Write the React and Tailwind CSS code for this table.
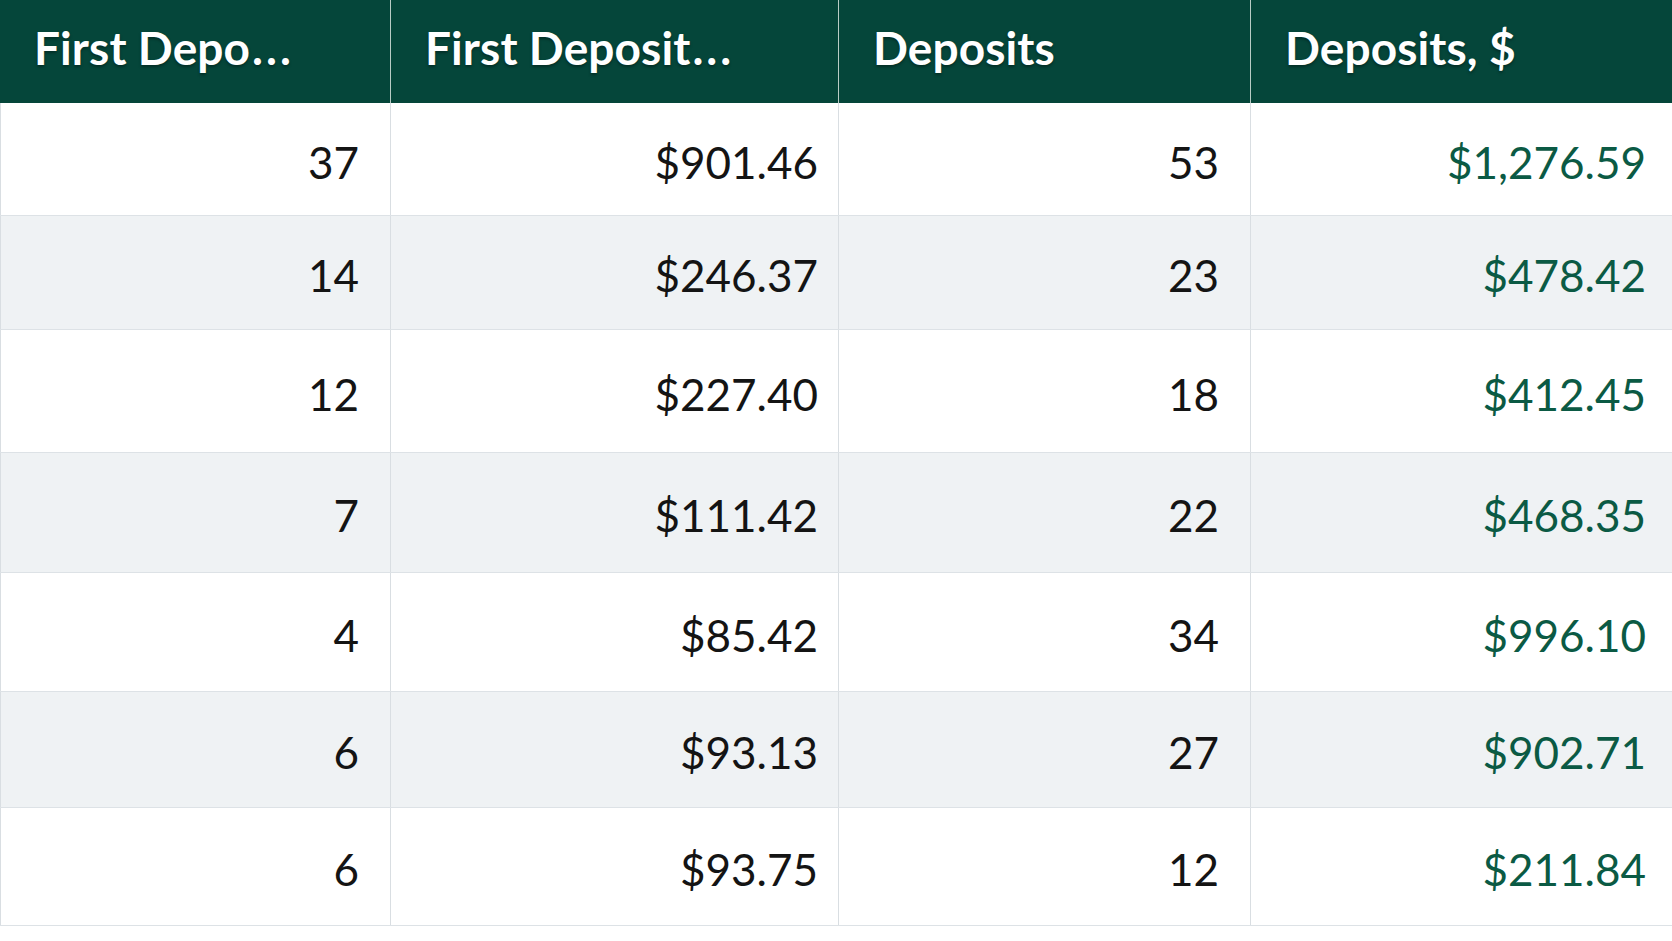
import React from "react";

const rows = [
  { h: "h-[113px]", a: "37", b: "$901.46", c: "53", d: "$1,276.59", striped: false },
  { h: "h-[114px]", a: "14", b: "$246.37", c: "23", d: "$478.42", striped: true },
  { h: "h-[123px]", a: "12", b: "$227.40", c: "18", d: "$412.45", striped: false },
  { h: "h-[120px]", a: "7", b: "$111.42", c: "22", d: "$468.35", striped: true },
  { h: "h-[119px]", a: "4", b: "$85.42", c: "34", d: "$996.10", striped: false },
  { h: "h-[116px]", a: "6", b: "$93.13", c: "27", d: "$902.71", striped: true },
  { h: "h-[118px]", a: "6", b: "$93.75", c: "12", d: "$211.84", striped: false },
];

const headers = [
  { t: "First Depo", dots: true },
  { t: "First Deposit", dots: true },
  { t: "Deposits", dots: false },
  { t: "Deposits, $", dots: false },
];

export default function App() {
  return (
    <div className="w-[1672px] h-[941px] bg-white overflow-hidden font-['Lato',_'Liberation_Sans',_sans-serif]">
      <div className="grid grid-cols-[391px_448px_412px_421px] h-[103px] bg-[#05463a]">
        {headers.map((h, i) => (
          <div
            key={i}
            className={`flex items-center pl-[34px] pb-[8px] text-[46px] font-bold text-white tracking-[0.1px] whitespace-nowrap [text-shadow:0_2px_3px_rgba(0,0,0,0.35)] ${
              i < 3 ? "border-r border-[#b9ccc5]" : ""
            }`}
          >
            {h.t}
            {h.dots && <span className="tracking-[3px] ml-[2px]">...</span>}
          </div>
        ))}
      </div>
      {rows.map((r, idx) => (
        <div
          key={idx}
          className={`grid grid-cols-[391px_448px_412px_421px] ${r.h} border-b border-[#dde2e6] ${
            r.striped ? "bg-[#eff2f4]" : "bg-white"
          }`}
        >
          <div className="flex items-center justify-end pr-[31px] pt-[5px] text-[44px] text-[#141414] border-r border-[#d9dee2] border-l">
            {r.a}
          </div>
          <div className="flex items-center justify-end pr-[20px] pt-[5px] text-[44px] text-[#141414] border-r border-[#d9dee2]">
            {r.b}
          </div>
          <div className="flex items-center justify-end pr-[31px] pt-[5px] text-[44px] text-[#141414] border-r border-[#d9dee2]">
            {r.c}
          </div>
          <div className="flex items-center justify-end pr-[26px] pt-[5px] text-[44px] text-[#0b5a44]">
            {r.d}
          </div>
        </div>
      ))}
    </div>
  );
}
